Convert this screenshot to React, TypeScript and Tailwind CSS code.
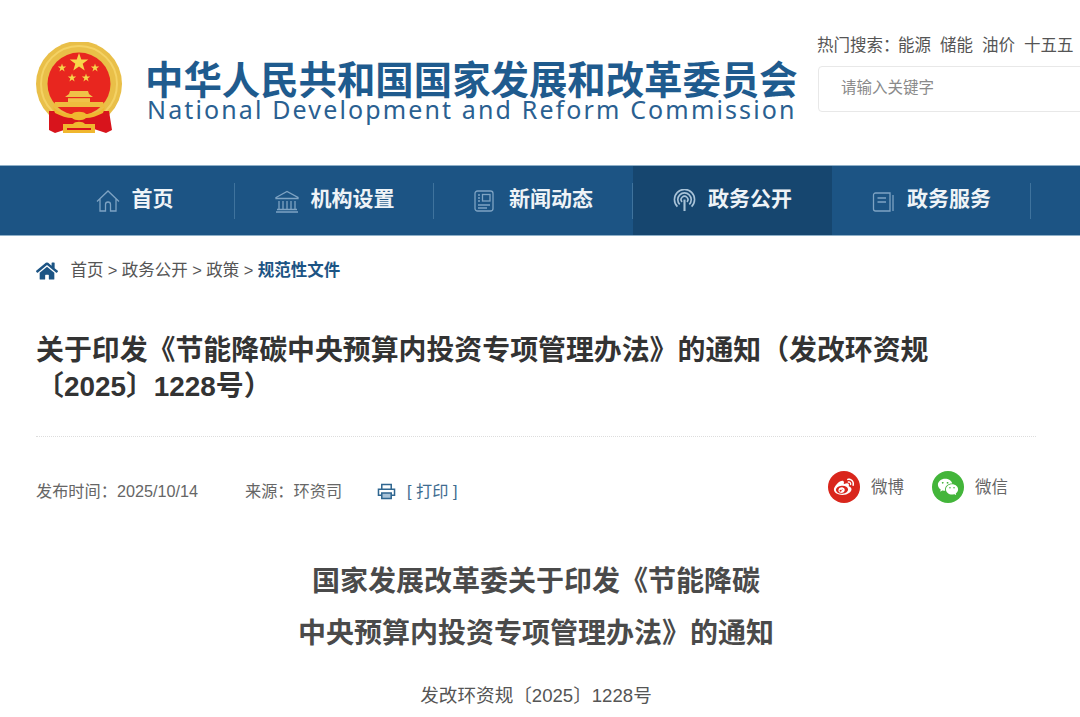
import { FaHome } from "react-icons/fa";
import { RiWechatFill, RiWeiboFill } from "react-icons/ri";

const Emblem = () => (
  <svg viewBox="0 0 86 92" className="w-[86px] h-[92px] shrink-0">
    <circle cx="43" cy="42" r="43" fill="#e9bf48" />
    <circle cx="43" cy="42" r="38" fill="none" stroke="#f4d264" strokeWidth="2" />
    <circle cx="43" cy="42" r="31.5" fill="#e8261f" />
    <path d="M43 11l2.3 6.6h7l-5.6 4.2 2 6.8-5.7-4-5.7 4 2-6.8-5.6-4.2h7z" fill="#f7d64a" />
    <path d="M26 21.5l1 3h3.2l-2.6 1.9 1 3.1-2.6-1.9-2.6 1.9 1-3.1-2.6-1.9H25z" fill="#f7d64a" />
    <path d="M59 21.5l1 3h3.2l-2.6 1.9 1 3.1-2.6-1.9-2.6 1.9 1-3.1-2.6-1.9H58z" fill="#f7d64a" />
    <path d="M36 31.5l1 3h3.2l-2.6 1.9 1 3.1-2.6-1.9-2.6 1.9 1-3.1-2.6-1.9H35z" fill="#f7d64a" />
    <path d="M50 31.5l1 3h3.2l-2.6 1.9 1 3.1-2.6-1.9-2.6 1.9 1-3.1-2.6-1.9H49z" fill="#f7d64a" />
    <path d="M34 49h18l1 3 4 3h-3v5H32v-5h-3l4-3z" fill="#f0c248" />
    <rect x="32" y="55" width="22" height="1.2" fill="#e8261f" />
    <path d="M19 60h48l2 5H17z" fill="#efbc3e" />
    <path d="M13 69l5 0 25 7 25-7h5l3 19-6 3-12-4H31l-12 4-6-3z" fill="#d8141c" />
    <path d="M17 65c6 6 14 7 19 7 2-3 12-3 14 0 5 0 13-1 19-7l-2 6c-6 3-12 5-17 5-3 3-11 3-14 0-5 0-11-2-17-5z" fill="#f0b72f" />
    <path d="M27 82h10c2-3 10-3 12 0h10v9H27z" fill="#f0b72f" />
    <path d="M31 86h24v2H31z" fill="#d8141c" />
  </svg>
);

const HomeIcon = () => (
  <svg viewBox="0 0 24 24" className="w-6 h-6 -ml-[2px]" fill="none" stroke="#7ea3c3" strokeWidth="1.3">
    <path d="M1 12.5L12 2l11 10.5M4 10v12h5.5v-6.5a2.5 2.5 0 015 0V22H20V10" />
  </svg>
);

const BankIcon = () => (
  <svg viewBox="0 0 24 24" className="w-6 h-6" fill="none" stroke="#7ea3c3" strokeWidth="1.3">
    <path d="M1 8.5L12 2.5l11 6v1H1zM4 12v8M8 12v8M12 12v8M16 12v8M20 12v8M2 20.5h20M1 23h22" />
  </svg>
);

const NewsIcon = () => (
  <svg viewBox="0 0 20 22" className="w-5 h-[22px] mr-[3px]" fill="none" stroke="#7ea3c3" strokeWidth="1.3">
    <rect x="1" y="1" width="18" height="20" rx="2.5" />
    <path d="M4 5h2M4 8h2M4 11h2M4 15h12M4 18h9" />
    <rect x="8.5" y="4.5" width="7.5" height="6.5" />
  </svg>
);

const SignalIcon = () => (
  <svg viewBox="0 0 24 24" className="w-[23px] h-[23px]" fill="none" stroke="#a9c3d8" strokeWidth="1.7">
    <path d="M12 11v12" strokeWidth="2.2" />
    <path d="M9.5 13.5a3.5 3.5 0 115 0M7 16a7 7 0 1110 0M4.6 18.4a10.5 10.5 0 1114.8 0" />
  </svg>
);

const BookIcon = () => (
  <svg viewBox="0 0 22 22" className="w-[22px] h-[22px] mr-[1px]" fill="none" stroke="#7ea3c3" strokeWidth="1.3">
    <path d="M18 3H3.5A2 2 0 001.5 5v14a2 2 0 002 2H18zM21 5v16M5.5 8h8.5M5.5 12h8.5" />
  </svg>
);

const ClockIcon = () => (
  <svg viewBox="0 0 24 24" className="w-6 h-6" fill="none" stroke="#7ea3c3" strokeWidth="1.3">
    <circle cx="12" cy="12" r="10.5" />
    <path d="M12 6v6l4 3" />
  </svg>
);

const NavItem = ({ icon, label, active, sep = true }: { icon: React.ReactNode; label: string; active?: boolean; sep?: boolean }) => (
  <div className={`relative w-[199px] h-full shrink-0 flex items-center justify-center gap-3 ${active ? "bg-[#16466f]" : ""}`}>
    {icon}
    {label && <span className="text-[21px] pb-1 font-bold text-[#eef3f7] leading-none">{label}</span>}
    {sep && <span className="absolute right-0 top-[17px] h-9 w-px bg-[#3f739d]" />}
  </div>
);

const PrinterIcon = () => (
  <svg viewBox="0 0 20 18" className="w-[19px] h-[17px] ml-[35px]" fill="none" stroke="#2f6690" strokeWidth="1.6">
    <path d="M5 6V1.5h10V6M5 13H1.5V6.5h17V13H15" />
    <path d="M5 10.5h10v6H5z" fill="#a9c3d8" />
  </svg>
);

export default function App() {
  return (
    <div className="w-[1080px] h-[717px] overflow-hidden bg-white font-['Liberation_Sans','Noto_Sans_CJK_SC',sans-serif]">
      <header className="h-[165px] flex pl-9 pt-[42px]">
        <Emblem />
        <div className="ml-[25px] w-[670px] shrink-0 pt-[15px] font-['Noto_Sans_CJK_SC',sans-serif]">
          <div className="text-[38.4px] leading-[40px] -ml-[2px] font-bold text-[#1f5b8e] whitespace-nowrap">
            中华人民共和国国家发展和改革委员会
          </div>
          <div className="text-[25px] leading-[26px] -mt-[1px] tracking-[2.13px] text-[#2a6091] whitespace-nowrap font-['Noto_Sans',sans-serif]">
            National Development and Reform Commission
          </div>
        </div>
        <div className="-mt-[9px] w-[300px] shrink-0">
          <div className="flex gap-[9px] text-[16.5px] leading-6 text-[#555] whitespace-nowrap">
            <span className="-mr-[9px] w-[81px]">热门搜索：</span>
            <span>能源</span>
            <span>储能</span>
            <span>油价</span>
            <span>十五五</span>
          </div>
          <div className="mt-[9px] ml-[1px] h-[46px] rounded border border-[#e8e8e8] flex items-center pl-[22px] pb-[2px] text-[15.5px] text-[#8a8a8a]">
            请输入关键字
          </div>
        </div>
      </header>

      <nav className="h-[71px] bg-[#1c5484] border-y border-[#8fb0c8] flex pl-9 overflow-hidden">
        <NavItem icon={<HomeIcon />} label="首页" />
        <NavItem icon={<BankIcon />} label="机构设置" />
        <NavItem icon={<NewsIcon />} label="新闻动态" />
        <NavItem icon={<SignalIcon />} label="政务公开" active sep={false} />
        <NavItem icon={<BookIcon />} label="政务服务" />
        <NavItem icon={<ClockIcon />} label="" />
      </nav>

      <div className="flex items-center gap-[4.4px] pl-9 pt-[20px] h-[49px] text-[16.5px] text-[#555]">
        <FaHome className="text-[#1c5484] text-[22px] mr-[8px]" />
        <span>首页</span>
        <span>&gt;</span>
        <span>政务公开</span>
        <span>&gt;</span>
        <span>政策</span>
        <span>&gt;</span>
        <span className="font-bold text-[#1c5484]">规范性文件</span>
      </div>

      <h1 className="mt-[48px] mx-9 w-[900px] text-[27.9px] leading-[36px] font-bold text-[#333]">
        关于印发《节能降碳中央预算内投资专项管理办法》的通知（发改环资规〔2025〕1228号）
      </h1>

      <div className="mt-[31px] mx-9 w-[1000px] border-t border-dotted border-[#dddddd]" />

      <div className="relative mx-9 w-[1000px] h-[108px] flex items-center text-[16.2px] text-[#666]">
        <span>发布时间：2025/10/14</span>
        <span className="ml-[47px]">来源：环资司</span>
        <PrinterIcon />
        <span className="ml-[11px] text-[#3f6c90]">[ 打印 ]</span>
        <div className="ml-auto mr-[28px] flex items-center gap-[11px] -mt-[8px] text-[16.5px]">
          <span className="w-[32px] h-[32px] rounded-full bg-[#d9261c] flex items-center justify-center">
            <RiWeiboFill className="text-white text-[22px]" />
          </span>
          <span className="mr-[17px]">微博</span>
          <span className="w-[32px] h-[32px] rounded-full bg-[#43b53a] flex items-center justify-center">
            <RiWechatFill className="text-white text-[22px]" />
          </span>
          <span>微信</span>
        </div>
      </div>

      <div className="mt-[11px] w-[1072px] text-center text-[#4a4a4a]">
        <div className="text-[28px] leading-[52px] font-bold">
          国家发展改革委关于印发《节能降碳
          <br />
          中央预算内投资专项管理办法》的通知
        </div>
        <div className="mt-[22px] text-[18.6px] leading-7 text-[#555]">发改环资规〔2025〕1228号</div>
      </div>
    </div>
  );
}
